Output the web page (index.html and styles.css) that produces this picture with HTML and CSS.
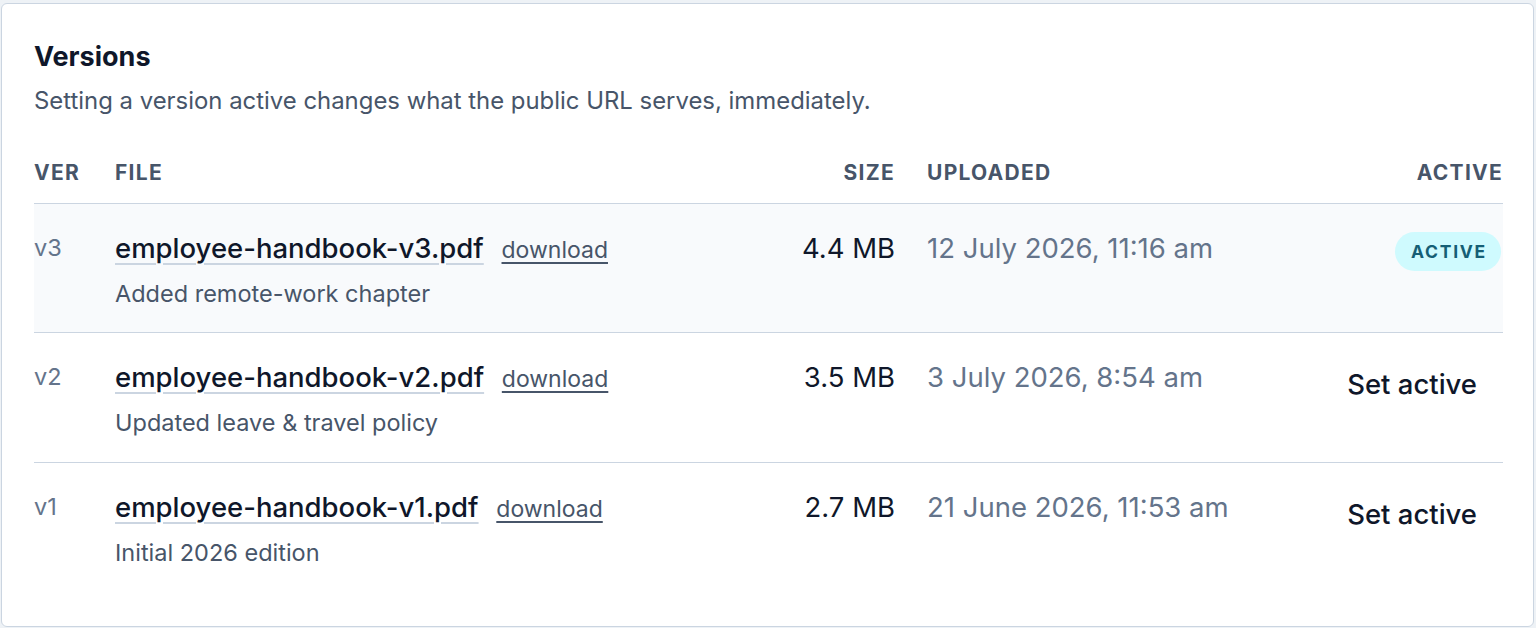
FILE: index.html
```html
<!DOCTYPE html>
<html lang="en">
<head>
  <meta charset="UTF-8">
  <meta name="viewport" content="width=device-width, initial-scale=1.0">
  <title>Versions</title>
  <link rel="stylesheet" href="styles.css">
</head>
<body>
  <section class="card">
    <h2>Versions</h2>
    <p class="hint">Setting a version active changes what the public URL serves, immediately.</p>

    <table class="versions">
      <colgroup>
        <col class="col-ver">
        <col>
        <col class="col-size">
        <col class="col-date">
        <col class="col-active">
      </colgroup>
      <thead>
        <tr>
          <th>Ver</th>
          <th>File</th>
          <th class="num">Size</th>
          <th>Uploaded</th>
          <th class="num">Active</th>
        </tr>
      </thead>
      <tbody>
        <tr class="current">
          <td class="ver">v3</td>
          <td>
            <a class="file" href="#">employee-handbook-v3.pdf</a>
            <a class="dl" href="#">download</a>
            <div class="note">Added remote-work chapter</div>
          </td>
          <td class="num size">4.4 MB</td>
          <td class="date">12 July 2026, 11:16 am</td>
          <td class="num"><span class="badge">Active</span></td>
        </tr>
        <tr>
          <td class="ver">v2</td>
          <td>
            <a class="file" href="#">employee-handbook-v2.pdf</a>
            <a class="dl" href="#">download</a>
            <div class="note">Updated leave &amp; travel policy</div>
          </td>
          <td class="num size">3.5 MB</td>
          <td class="date">3 July 2026, 8:54 am</td>
          <td class="num"><button class="set-btn" type="button">Set active</button></td>
        </tr>
        <tr>
          <td class="ver">v1</td>
          <td>
            <a class="file" href="#">employee-handbook-v1.pdf</a>
            <a class="dl" href="#">download</a>
            <div class="note">Initial 2026 edition</div>
          </td>
          <td class="num size">2.7 MB</td>
          <td class="date">21 June 2026, 11:53 am</td>
          <td class="num"><button class="set-btn" type="button">Set active</button></td>
        </tr>
      </tbody>
    </table>
  </section>
</body>
</html>
```

FILE: styles.css
```css
body {
  margin: 0;
  padding: 3px 2px 0 1px;
  background: #eef2f6;
  font-family: Inter, "Noto Sans", sans-serif;
  color: #0f172a;
}
.card {
  background: #fff;
  border: 1px solid #cbd5e1;
  border-radius: 6px;
  padding: 36px 30px 34px 32px;
}
h2 {
  margin: 0;
  font-size: 27px;
  line-height: 34px;
  font-weight: 700;
  color: #0f172a;
}
.hint {
  margin: 12px 0 0;
  font-size: 23.9px;
  line-height: 30px;
  color: #475569;
}
.versions {
  width: 100%;
  margin-top: 35px;
  border-collapse: collapse;
  table-layout: fixed;
}
.col-ver { width: 65px; }
.col-size { width: 130px; }
.col-date { width: 392px; }
.col-active { width: 200px; }
th, td {
  padding: 0 16px;
  text-align: left;
  vertical-align: top;
}
th:first-child, td:first-child { padding-left: 0; }
th:last-child, td:last-child { padding-right: 0; }
th {
  padding-top: 10px;
  padding-bottom: 18px;
  font-size: 21px;
  line-height: 24px;
  font-weight: 700;
  letter-spacing: 0.06em;
  text-transform: uppercase;
  color: #475569;
  border-bottom: 1px solid #cbd5e1;
}
th.num, td.num { text-align: right; }
td {
  padding-top: 26px;
  padding-bottom: 23px;
  font-size: 27.5px;
  line-height: 36px;
}
tbody tr + tr td {
  padding-bottom: 24px;
  border-top: 1px solid #cbd5e1;
}
tr.current td {
  background: #f8fafc;
  border-bottom: 1px solid #cbd5e1;
}
td.ver {
  font-size: 23.5px;
  color: #64748b;
}
.file {
  color: #0f172a;
  font-weight: 500;
  text-decoration: underline;
  text-decoration-color: #cbd5e1;
  text-decoration-thickness: 2px;
  text-underline-offset: 5px;
}
.dl {
  margin-left: 10px;
  font-size: 23px;
  color: #475569;
  text-decoration: underline;
  text-underline-offset: 4px;
}
.note {
  margin-top: 11px;
  font-size: 23.5px;
  line-height: 30px;
  color: #475569;
}
.size { color: #0f172a; }
.date { color: #64748b; }
.badge {
  display: inline-block;
  margin: 1px 2px 0 0;
  padding: 0 14px 0 16px;
  border-radius: 20px;
  background: #cffafe;
  color: #155e75;
  font-size: 17.5px;
  line-height: 39px;
  font-weight: 700;
  letter-spacing: 0.1em;
  text-transform: uppercase;
}
.set-btn {
  margin-top: 3px;
  padding: 4px 26px;
  border: none;
  background: transparent;
  font-family: inherit;
  font-size: 27.5px;
  line-height: 36px;
  font-weight: 500;
  color: #0f172a;
  cursor: pointer;
}
```
